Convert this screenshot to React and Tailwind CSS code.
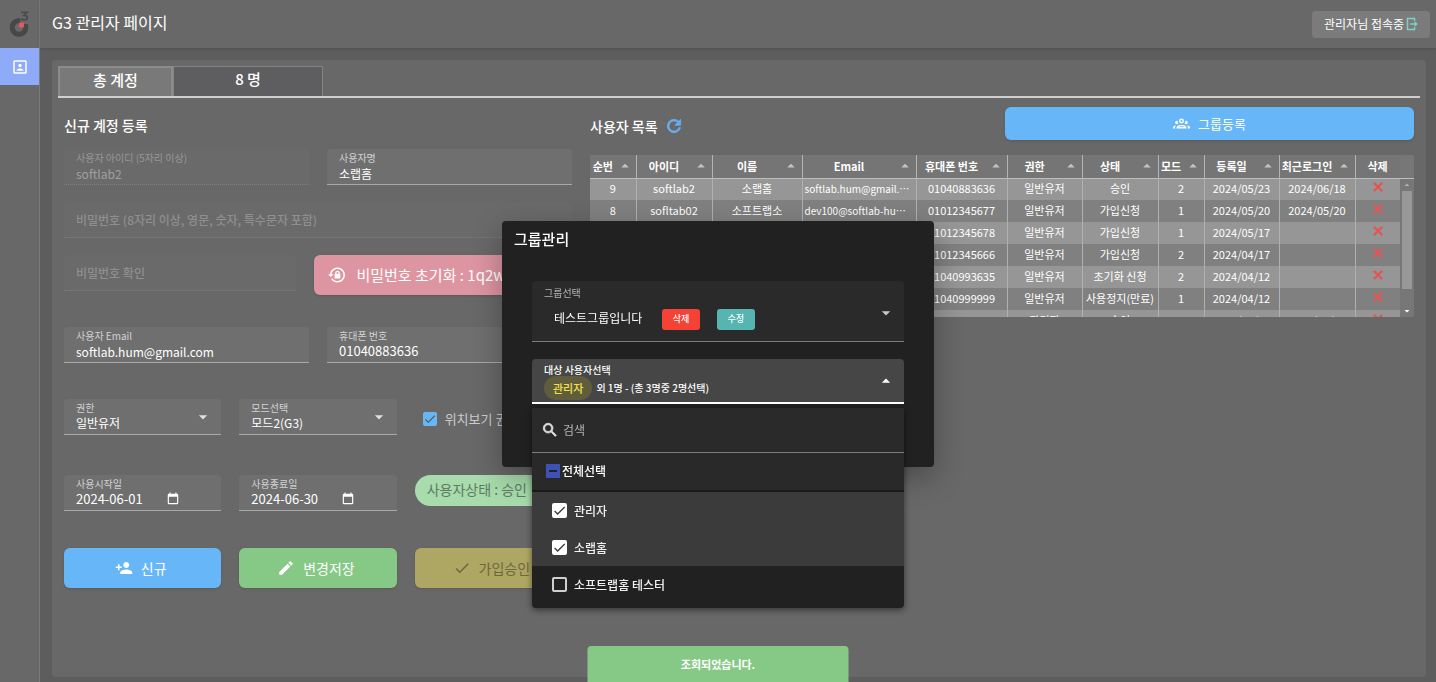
import React, { useState } from 'react';
import { MdArrowDropDown, MdArrowDropUp, MdCheck, MdEdit, MdPersonAdd } from 'react-icons/md';
import { X } from 'lucide-react';

const USERS = [
  { no: 9, id: 'softlab2', name: '소랩홈', email: 'softlab.hum@gmail.com', phone: '01040883636', role: '일반유저', status: '승인', mode: 2, created: '2024/05/23', login: '2024/06/18' },
  { no: 8, id: 'sofltab02', name: '소프트랩소', email: 'dev100@softlab-hum.com', phone: '01012345677', role: '일반유저', status: '가입신청', mode: 1, created: '2024/05/20', login: '2024/05/20' },
  { no: 7, id: 'softlab03', name: '소프트랩', email: 'dev101@softlab-hum.com', phone: '01012345678', role: '일반유저', status: '가입신청', mode: 1, created: '2024/05/17', login: '' },
  { no: 6, id: 'softlab04', name: '소프트랩', email: 'dev102@softlab-hum.com', phone: '01012345666', role: '일반유저', status: '가입신청', mode: 2, created: '2024/04/17', login: '' },
  { no: 5, id: 'softlab05', name: '소프트랩', email: 'dev103@softlab-hum.com', phone: '01040993635', role: '일반유저', status: '초기화 신청', mode: 2, created: '2024/04/12', login: '' },
  { no: 4, id: 'softlab06', name: '소프트랩', email: 'dev104@softlab-hum.com', phone: '01040999999', role: '일반유저', status: '사용정지(만료)', mode: 1, created: '2024/04/12', login: '' },
  { no: 3, id: 'softlab07', name: '소프트랩', email: 'dev105@softlab-hum.com', phone: '01040999998', role: '관리자', status: '승인', mode: 1, created: '2024/04/12', login: '2024/06/18' },
];

const COLUMNS = [
  { key: 'no', label: '순번', width: 'w-[46px]' },
  { key: 'id', label: '아이디', width: 'w-[76px]' },
  { key: 'name', label: '이름', width: 'w-[90px]' },
  { key: 'email', label: 'Email', width: 'w-[114px]' },
  { key: 'phone', label: '휴대폰 번호', width: 'w-[91px]' },
  { key: 'role', label: '권한', width: 'w-[75px]' },
  { key: 'status', label: '상태', width: 'w-[76px]' },
  { key: 'mode', label: '모드', width: 'w-[46px]' },
  { key: 'created', label: '등록일', width: 'w-[75px]' },
  { key: 'login', label: '최근로그인', width: 'w-[76px]' },
];

const Icon = ({ d, className }) => (
  <svg viewBox="0 0 24 24" fill="currentColor" className={className} aria-hidden="true">
    <path d={d} />
  </svg>
);

const ACCOUNT_BOX = 'M19,19H5V5H19M19,3H5A2,2 0 0,0 3,5V19A2,2 0 0,0 5,21H19A2,2 0 0,0 21,19V5C21,3.89 20.1,3 19,3M16.5,16.25C16.5,14.75 13.5,14 12,14C10.5,14 7.5,14.75 7.5,16.25V17H16.5M12,12.25A2.25,2.25 0 0,0 14.25,10A2.25,2.25 0 0,0 12,7.75A2.25,2.25 0 0,0 9.75,10A2.25,2.25 0 0,0 12,12.25Z';
const LOCK_RESET = 'M12.63,2C18.16,2 22.64,6.5 22.64,12C22.64,17.5 18.16,22 12.63,22C9.12,22 6.05,20.18 4.26,17.43L5.84,16.18C7.25,18.47 9.76,20 12.64,20A8,8 0 0,0 20.64,12A8,8 0 0,0 12.64,4C8.56,4 5.2,7.06 4.71,11H7.47L3.73,14.73L0,11H2.69C3.19,5.95 7.45,2 12.63,2M15.59,10.24C16.09,10.25 16.5,10.65 16.5,11.16V15.77C16.5,16.27 16.09,16.69 15.58,16.69H9.67C9.16,16.69 8.75,16.27 8.75,15.77V11.16C8.75,10.65 9.16,10.25 9.66,10.24V9.23C9.66,7.6 11,6.25 12.63,6.25C14.26,6.25 15.59,7.6 15.59,9.23V10.24M12.63,7.86C11.87,7.86 11.25,8.47 11.25,9.24V10.24H14V9.23C14,8.47 13.39,7.86 12.63,7.86Z';
const ACCOUNT_GROUP = 'M12,5A3.5,3.5 0 0,0 8.5,8.5A3.5,3.5 0 0,0 12,12A3.5,3.5 0 0,0 15.5,8.5A3.5,3.5 0 0,0 12,5M12,7A1.5,1.5 0 0,1 13.5,8.5A1.5,1.5 0 0,1 12,10A1.5,1.5 0 0,1 10.5,8.5A1.5,1.5 0 0,1 12,7M5.5,8A2.5,2.5 0 0,0 3,10.5C3,11.44 3.53,12.25 4.29,12.68C4.65,12.88 5.06,13 5.5,13C5.94,13 6.35,12.88 6.71,12.68C7.08,12.47 7.39,12.17 7.62,11.81C6.89,10.86 6.5,9.7 6.5,8.5C6.5,8.41 6.5,8.31 6.5,8.22C6.2,8.08 5.86,8 5.5,8M18.5,8C18.14,8 17.8,8.08 17.5,8.22C17.5,8.31 17.5,8.41 17.5,8.5C17.5,9.7 17.11,10.86 16.38,11.81C16.5,12 16.63,12.15 16.78,12.3C16.94,12.45 17.1,12.58 17.29,12.68C17.65,12.88 18.06,13 18.5,13C18.94,13 19.35,12.88 19.71,12.68C20.47,12.25 21,11.44 21,10.5A2.5,2.5 0 0,0 18.5,8M12,14C9.66,14 5,15.17 5,17.5V19H19V17.5C19,15.17 14.34,14 12,14M4.71,14.55C2.78,14.78 0,15.76 0,17.5V19H3V17.07C3,16.06 3.69,15.22 4.71,14.55M19.29,14.55C20.31,15.22 21,16.06 21,17.07V19H24V17.5C24,15.76 21.22,14.78 19.29,14.55M12,16C13.53,16 15.24,16.5 16.23,17H7.77C8.76,16.5 10.47,16 12,16Z';
const CALENDAR = 'M19,3H18V1H16V3H8V1H6V3H5C3.89,3 3,3.89 3,5V19A2,2 0 0,0 5,21H19A2,2 0 0,0 21,19V5A2,2 0 0,0 19,3M19,19H5V8H19V19Z';
const REFRESH = 'M17.65,6.35C16.2,4.9 14.21,4 12,4A8,8 0 0,0 4,12A8,8 0 0,0 12,20C15.73,20 18.84,17.45 19.73,14H17.65C16.83,16.33 14.61,18 12,18A6,6 0 0,1 6,12A6,6 0 0,1 12,6C13.66,6 15.14,6.69 16.22,7.78L13,11H20V4L17.65,6.35Z';
const MAGNIFY = 'M9.5,3A6.5,6.5 0 0,1 16,9.5C16,11.11 15.41,12.59 14.44,13.73L14.71,14H15.5L20.5,19L19,20.5L14,15.5V14.71L13.73,14.44C12.59,15.41 11.11,16 9.5,16A6.5,6.5 0 0,1 3,9.5A6.5,6.5 0 0,1 9.5,3M9.5,5C7,5 5,7 5,9.5C5,12 7,14 9.5,14C12,14 14,12 14,9.5C14,7 12,5 9.5,5Z';

const Logo = () => (
  <svg viewBox="0 0 24 28" className="h-7 w-6" aria-hidden="true">
    <circle cx="11" cy="17.500" r="6.800" fill="none" stroke="#484848" strokeWidth="5.200" />
    <path d="M12 8h9v6h-5l-3 2z" fill="#686868" />
    <path d="M13 2.300h6l-3 3c2.200 0 3.300 1 3.300 2.200 0 1.700-1.500 2.300-3.100 2.300-1.300 0-2.500-.4-3.200-1" fill="none" stroke="#4c4c4c" strokeWidth="1.800" />
    <rect x="11" y="12.500" width="5" height="5" rx="1" fill="#e8575f" />
  </svg>
);

const Field = ({ id, label, value, disabled, numeric, icon }) => (
  <div className={`h-9 rounded-t px-3 pt-[3px] border-b ${disabled ? 'border-dotted border-[#7d7d7d] bg-[#6a6a6a] text-[#a0a0a0]' : 'border-[#a8a8a8] bg-[#6f6f6f] text-white'}`}>
    <label htmlFor={id} className={`block text-[10px] leading-3 ${disabled ? 'text-[#979797]' : 'text-[#d2d2d2]'}`}>{label}</label>
    <div className="flex h-[18px] items-center">
      <input id={id} type="text" defaultValue={value} disabled={disabled} className={`h-[18px] bg-transparent outline-none ${numeric ? 'text-[13px]' : 'text-xs'} ${icon ? 'w-[90px]' : 'w-full'}`} />
      {icon && <Icon d={CALENDAR} className="h-3.5 w-3.5 shrink-0" />}
    </div>
  </div>
);

const SelectField = ({ id, label, value }) => (
  <div className="flex h-9 items-center rounded-t border-b border-[#a8a8a8] bg-[#6f6f6f] px-3">
    <div className="min-w-0 flex-1">
      <label htmlFor={id} className="block text-[10px] leading-3 text-[#d2d2d2]">{label}</label>
      <select id={id} defaultValue={value} className="block h-[18px] w-full appearance-none bg-transparent text-xs text-white outline-none">
        <option>{value}</option>
      </select>
    </div>
    <MdArrowDropDown className="-mr-1 h-5 w-5 shrink-0 text-[#e0e0e0]" />
  </div>
);

const PasswordField = ({ id, label }) => (
  <div className="h-9 rounded-t border-b border-dotted border-[#7d7d7d] bg-[#6a6a6a]">
    <input id={id} type="password" aria-label={label} placeholder={label} disabled className="h-full w-full bg-transparent px-3 text-xs font-medium placeholder:text-[#8f8f8f] outline-none" />
  </div>
);

const UserTable = () => (
  <div className="mt-1.5 flex h-[162px] overflow-hidden">
    <div className="min-w-0 flex-1">
      <table className="w-full table-fixed border-collapse text-center text-[11px] text-white">
        <colgroup>
          {COLUMNS.map((col) => <col key={col.key} className={col.width} />)}
          <col className="w-[45px]" />
        </colgroup>
        <thead>
          <tr className="h-[23px] border-b border-[#bdbdbd] bg-[#757575]">
            {COLUMNS.map((col) => (
              <th key={col.key} className="border-r border-[#b4b4b4] p-0 font-bold">
                <div className="flex items-center pr-0.5">
                  <span className="flex-1 whitespace-nowrap">{col.label}</span>
                  <MdArrowDropUp className="h-[18px] w-[18px] shrink-0 text-[#c4c4c4]" />
                </div>
              </th>
            ))}
            <th className="border-r border-[#b4b4b4] p-0 font-bold">삭제</th>
          </tr>
        </thead>
        <tbody>
          {USERS.map((user) => (
            <tr key={user.no} className="h-[22px] odd:bg-[#969696] even:bg-[#808080]">
              {COLUMNS.map((col) => (
                <td key={col.key} className={`truncate border-r border-[#b0b0b0] px-0.5 pt-0 pb-0.5 ${col.key === 'email' ? 'text-[10px]' : ''}`}>{user[col.key]}</td>
              ))}
              <td className="border-r border-[#b0b0b0] p-0">
                <button type="button" aria-label="삭제" className="block w-full pb-1 text-[#e35555]">
                  <X className="mx-auto h-3.5 w-3.5" strokeWidth={4} />
                </button>
              </td>
            </tr>
          ))}
        </tbody>
      </table>
    </div>
    <div className="flex w-3.5 shrink-0 flex-col items-center bg-[#777777]">
      <div className="h-6 w-full border-b border-[#bdbdbd]" />
      <MdArrowDropUp className="h-3 w-3.5 shrink-0 text-[#b0b0b0]" />
      <div className="w-2.5 flex-1 bg-[#989898]" />
      <div className="flex h-7 items-end">
        <MdArrowDropDown className="h-3 w-3.5 text-white" />
      </div>
    </div>
  </div>
);

const MenuItem = ({ id, label, checked, onChange }) => (
  <li className={`flex h-[37px] items-center gap-[7px] px-5 ${checked ? 'bg-[#3b3b3b]' : 'bg-[#212121]'}`}>
    <span className="relative flex h-[15px] w-[15px]">
      <input id={id} type="checkbox" checked={checked} onChange={onChange} className="h-full w-full appearance-none rounded-xs border-2 border-[#d0d0d0] checked:border-white checked:bg-white" />
      {checked && <MdCheck className="pointer-events-none absolute inset-0 h-full w-full text-[#3b3b3b]" />}
    </span>
    <label htmlFor={id} className="text-xs font-medium text-[#f0f0f0]">{label}</label>
  </li>
);

const GroupDialog = () => {
  const [members, setMembers] = useState([
    { name: '관리자', checked: true },
    { name: '소랩홈', checked: true },
    { name: '소프트랩홈 테스터', checked: false },
  ]);

  const toggle = (name) => {
    setMembers(members.map((m) => (m.name === name ? { ...m, checked: !m.checked } : m)));
  };

  const selected = members.filter((m) => m.checked);

  return (
    <div className="fixed inset-0 flex items-center justify-center pt-1.5">
      <div role="dialog" aria-labelledby="group-title" className="w-[432px] rounded bg-[#212121] pb-[63px] text-white shadow-[0_10px_30px_rgba(0,0,0,0.3)]">
        <h2 id="group-title" className="h-9 px-3 text-[15px] leading-9 font-medium">그룹관리</h2>

        <div className="mx-[30px] mt-6 h-[61px] rounded-t border-b border-[#7c7c7c] bg-[#2a2a2a] px-3 pt-1.5">
          <label htmlFor="group" className="block text-[10px] leading-3 text-[#b5b5b5]">그룹선택</label>
          <div className="flex items-center">
            <select id="group" className="ml-2.5 h-10 w-[108px] appearance-none bg-transparent pb-0.5 text-xs outline-none">
              <option>테스트그룹입니다</option>
            </select>
            <button type="button" className="h-[21px] w-[38px] rounded-[3px] bg-[#f44336] text-[9px] font-medium">삭제</button>
            <button type="button" className="ml-[17px] h-[21px] w-[38px] rounded-[3px] bg-[#56b5b0] text-[9px] font-medium">수정</button>
            <MdArrowDropDown className="-mr-1 mb-3 ml-auto h-5 w-5 text-[#c8c8c8]" />
          </div>
        </div>

        <div className="relative mx-[30px] mt-[17px]">
          <button type="button" aria-haspopup="listbox" aria-expanded="true" className="flex h-[45px] w-full items-center rounded-t border-b-2 border-white bg-[#464646] px-3 text-left">
            <span className="flex-1 pt-0.5">
              <span className="block text-[10px] leading-3 font-medium">대상 사용자선택</span>
              <span className="flex items-center gap-1">
                <span className="h-6 rounded-full bg-[#5f5d3c] px-[9px] text-[11px] leading-6 font-medium text-[#f5e04a]">{selected[0] ? selected[0].name : ''}</span>
                <span className="text-[10px] font-medium">외 {selected.length - 1}명 - (총 {members.length}명중 {selected.length}명선택)</span>
              </span>
            </span>
            <MdArrowDropUp className="-mr-1 h-5 w-5" />
          </button>

          <div className="absolute inset-x-0 top-full mt-1 overflow-hidden rounded-b bg-[#212121] pb-[5px] shadow-[0_2px_6px_rgba(0,0,0,0.5)]">
            <div className="flex h-[45px] items-center gap-1 border-b border-[#7c7c7c] bg-[#2a2a2a] px-[9px]">
              <Icon d={MAGNIFY} className="h-[18px] w-[18px] stroke-current stroke-1 text-[#e0e0e0]" />
              <input type="text" aria-label="검색" placeholder="검색" className="min-w-0 flex-1 bg-transparent text-xs outline-none placeholder:text-[#b5b5b5]" />
            </div>
            <div className="flex h-[39px] items-center gap-0.5 border-b-2 border-[#1a1a1a] bg-[#292929] px-3.5 pb-0.5">
              <span className="relative flex h-3.5 w-3.5">
                <input id="all" type="checkbox" className="h-full w-full appearance-none bg-[#3f51b5]" />
                <span className="pointer-events-none absolute inset-x-[3px] top-1.5 h-0.5 bg-[#222222]" />
              </span>
              <label htmlFor="all" className="text-xs font-medium">전체선택</label>
            </div>
            <ul>
              {members.map((m) => (
                <MenuItem key={m.name} id={`member-${m.name}`} label={m.name} checked={m.checked} onChange={() => toggle(m.name)} />
              ))}
            </ul>
          </div>
        </div>
      </div>
    </div>
  );
};

const App = () => {
  return (
    <div className="flex min-h-screen bg-[#5d5d5d] font-['Noto_Sans_CJK_KR','Noto_Sans',sans-serif] text-white">
      {/* Side navigation */}
      <nav className="flex w-10 shrink-0 flex-col border-r border-[#7a7a7a] bg-[#686868]">
        <div className="flex h-12 items-center justify-center">
          <Logo />
        </div>
        <a href="#accounts" aria-label="계정" className="flex h-[37px] items-center justify-center bg-[#8dabf8]">
          <Icon d={ACCOUNT_BOX} className="h-[18px] w-[18px]" />
        </a>
      </nav>

      <div className="flex min-w-0 flex-1 flex-col">
        <header className="flex h-12 items-center justify-between bg-[#686868] pr-1.5 pl-3 shadow-sm">
          <h1 className="pb-1 text-base">G3 관리자 페이지</h1>
          <button type="button" className="flex h-[27px] items-center rounded bg-[#7b7b7b] px-3 text-xs">
            관리자님 접속중
            <svg viewBox="0 0 12 14" className="ml-0.5 h-3.5 w-3" fill="none" stroke="#7fd0c8" strokeWidth="1.500" aria-hidden="true">
              <path d="M8.500 4V1.500h-7v11h7V10" />
              <path d="M4 7h6M8.500 5l2.200 2-2.200 2" />
            </svg>
          </button>
        </header>

        <main className="flex flex-1 flex-col pt-3 pr-2.5 pb-[5px] pl-3">
          <section className="flex-1 rounded bg-[#686868] p-1.5">
            <div className="flex border-b-2 border-[#cfcfcf] text-[15px] font-medium">
              <div className="h-[30px] w-[115px] border-2 border-b-0 border-[#8c8c8c] bg-[#797979] text-center leading-6">총 계정</div>
              <div className="h-[30px] w-[150px] border border-b-0 border-[#848484] bg-[#5e5e60] text-center leading-6">8 명</div>
            </div>

            <div className="mt-[5px] grid grid-cols-[508fr_824fr] gap-[18px] px-1.5">
              {/* New account form */}
              <form className="min-w-0" onSubmit={(e) => e.preventDefault()}>
                <h2 className="h-[46px] text-sm leading-[44px] font-medium">신규 계정 등록</h2>
                <div className="grid grid-cols-2 gap-[18px]">
                  <Field id="user-id" label="사용자 아이디 (5자리 이상)" value="softlab2" disabled />
                  <Field id="user-name" label="사용자명" value="소랩홈" />
                </div>
                <div className="mt-[17px]">
                  <PasswordField id="password" label="비밀번호 (8자리 이상, 영문, 숫자, 특수문자 포함)" />
                </div>
                <div className="mt-[17px] grid grid-cols-[232fr_257fr] gap-[18px]">
                  <PasswordField id="password-confirm" label="비밀번호 확인" />
                  <button type="button" className="flex h-10 items-center gap-2.5 overflow-hidden rounded-md bg-[#dd95a2] px-3.5 text-[15px] whitespace-nowrap shadow">
                    <Icon d={LOCK_RESET} className="h-[18px] w-[18px] shrink-0" />
                    비밀번호 초기화 : 1q2w3e4r
                  </button>
                </div>
                <div className="mt-8 grid grid-cols-2 gap-[18px]">
                  <Field id="email" label="사용자 Email" value="softlab.hum@gmail.com" />
                  <Field id="phone" label="휴대폰 번호" value="01040883636" numeric />
                </div>
                <div className="mt-9 grid grid-cols-3 gap-[18px]">
                  <SelectField id="role" label="권한" value="일반유저" />
                  <SelectField id="mode" label="모드선택" value="모드2(G3)" />
                  <div className="flex items-center gap-2 pt-1 pl-2">
                    <span className="relative flex h-3.5 w-3.5 shrink-0">
                      <input id="location" type="checkbox" defaultChecked className="h-full w-full appearance-none rounded-xs bg-[#67b7f7]" />
                      <MdCheck className="pointer-events-none absolute inset-0 h-full w-full text-[#555555]" />
                    </span>
                    <label htmlFor="location" className="text-[13px] whitespace-nowrap text-[#cccccc]">위치보기 권한</label>
                  </div>
                </div>
                <div className="mt-10 grid grid-cols-3 gap-[18px]">
                  <Field id="start-date" label="사용시작일" value="2024-06-01" numeric icon />
                  <Field id="end-date" label="사용종료일" value="2024-06-30" numeric icon />
                  <div className="flex h-[31px] items-center overflow-hidden rounded-full bg-[#a8dcac] px-3 pb-1 text-sm whitespace-nowrap text-[#617a63]">사용자상태 : 승인</div>
                </div>
                <div className="mt-[37px] grid grid-cols-3 gap-[18px] text-sm">
                  <button type="button" className="flex h-10 items-center justify-center gap-2 rounded-md bg-[#67b7f8] pr-1 shadow">
                    <MdPersonAdd className="h-[18px] w-[18px]" />
                    신규
                  </button>
                  <button type="button" className="flex h-10 items-center justify-center gap-2 rounded-md bg-[#86c986] pr-1 shadow">
                    <MdEdit className="h-[18px] w-[18px]" />
                    변경저장
                  </button>
                  <button type="button" disabled className="flex h-10 items-center justify-center gap-2 rounded-md bg-[#aea663] pr-1 text-[#6c683f] shadow">
                    <MdCheck className="h-[18px] w-[18px]" />
                    가입승인
                  </button>
                </div>
              </form>

              {/* User list */}
              <div className="min-w-0">
                <div className="grid h-[46px] grid-cols-2 gap-1.5">
                  <div className="flex items-center gap-1.5">
                    <h2 className="text-sm font-medium">사용자 목록</h2>
                    <button type="button" aria-label="새로고침" className="text-[#67adec]">
                      <Icon d={REFRESH} className="h-5 w-5 stroke-current stroke-1" />
                    </button>
                  </div>
                  <button type="button" className="mt-1 flex h-[33px] items-center justify-center gap-2 rounded-md bg-[#67b7f8] text-[13px] shadow">
                    <Icon d={ACCOUNT_GROUP} className="h-[17px] w-[17px]" />
                    그룹등록
                  </button>
                </div>
                <UserTable />
              </div>
            </div>
          </section>
        </main>
      </div>

      <GroupDialog />

      <div role="status" className="fixed bottom-0 left-1/2 flex h-9 w-[261px] -translate-x-1/2 items-center justify-center rounded-t bg-[#86c986] text-[11px] font-bold">
        조회되었습니다.
      </div>
    </div>
  );
};

export default App;
